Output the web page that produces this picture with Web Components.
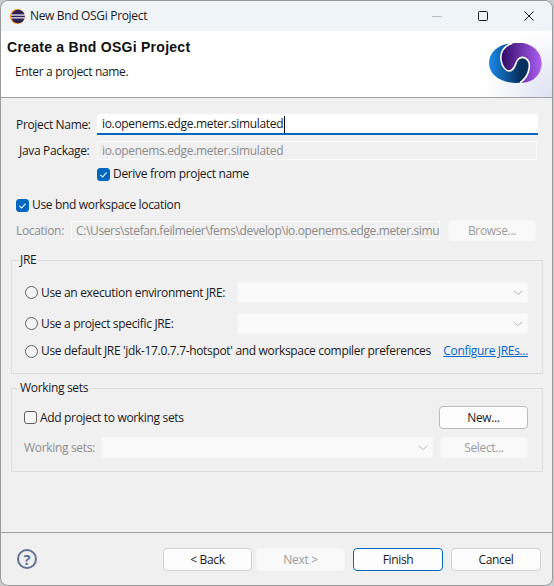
<!DOCTYPE html>
<html>
<head>
<meta charset="utf-8">
<title>New Bnd OSGi Project</title>
<style>
    html, body { margin: 0; padding: 0; height: 586px; overflow: hidden; background: #c9cbcd; }
    body { font: 12px/16px "Open Sans", sans-serif; letter-spacing: -0.33px; color: #1a1a1a; }
</style>
</head>
<body>

<template id="bnd-title-bar-template">
    <style>
        :host { display: flex; align-items: center; height: 30px; background: #eff4f9; flex: none; border-radius: 7px 7px 0 0; }
        svg.app { margin-left: 9px; margin-right: 5px; flex: none; }
        .caption { flex: 1; font-size: 12px; }
        .win { width: 46px; height: 30px; display: flex; align-items: center; justify-content: center; flex: none; }
    </style>
    <svg class="app" width="15" height="15" viewBox="0 0 15 15">
        <circle cx="7.5" cy="7.5" r="7.5" fill="#f7941e"/>
        <circle cx="8" cy="7.5" r="6.8" fill="#2c2255"/>
        <rect x="1" y="5.4" width="14" height="1.3" fill="#e8e6f0"/>
        <rect x="1" y="8.2" width="14" height="1.3" fill="#e8e6f0"/>
    </svg>
    <span class="caption"><slot></slot></span>
    <div class="win"><svg width="10" height="10"><path d="M0 5.5h10" stroke="#b8bcc0" stroke-width="1"/></svg></div>
    <div class="win"><svg width="10" height="10"><rect x=".5" y=".5" width="9" height="9" rx="1.2" fill="none" stroke="#1a1a1a"/></svg></div>
    <div class="win"><svg width="10" height="10"><path d="M.3 .3l9.4 9.4M9.7 .3L.3 9.7" stroke="#1a1a1a" stroke-width="1"/></svg></div>
</template>

<template id="bnd-banner-template">
    <style>
        :host { display: flex; flex: none; height: 67px; box-sizing: border-box; position: relative;
                background: radial-gradient(circle at 100% 100%, #dce2f3 0, #eef0f9 34px, #fff 68px); border-bottom: 1px solid #a0a0a0; }
        .text { flex: 1; padding: 7px 0 0 6px; }
        .title { font: bold 14px/18px "Liberation Sans", sans-serif; letter-spacing: 0.27px; color: #111; }
        .sub { margin: 8px 0 0 8px; font-size: 12px; line-height: 16px; }
        svg { flex: none; margin: 12px 10px 0 0; }
    </style>
    <div class="text">
        <div class="title"><slot name="title"></slot></div>
        <div class="sub"><slot name="sub"></slot></div>
    </div>
    <svg width="53" height="40" viewBox="0 0 53 40">
        <defs>
            <linearGradient id="blue" x1="0" x2="1" y1="0" y2="0"><stop offset="0" stop-color="#1b8ceb"/><stop offset=".75" stop-color="#06305f"/></linearGradient>
            <linearGradient id="purple" x1="0" x2="1" y1="0" y2="0"><stop offset="0" stop-color="#2f0a63"/><stop offset="1" stop-color="#ad5ff5"/></linearGradient>
        </defs>
        <path fill="url(#purple)" d="M23 .4C14 3 11 10 12 17C13 24 17 28 20 28C25 28 26 22 28 18C30 14 34 14 36 15C40 17 41 21 40 26C39 32 35 37 31 39.8C45 40 52.6 31 52.6 20C52.6 8 42 0 31 0C28 0 25 0 23 .4Z"/>
        <path fill="url(#blue)" d="M23 .4C14 3 11 10 12 17C13 24 17 28 20 28C25 28 26 22 28 18C30 14 34 14 36 15C40 17 41 21 40 26C39 32 35 37 31 39.8C14 41 0 33 0 20C0 9 10 1 23 .4Z"/>
        <path fill="none" stroke="#fff" stroke-width="1.6" d="M23 .4C14 3 11 10 12 17C13 24 17 28 20 28C25 28 26 22 28 18C30 14 34 14 36 15C40 17 41 21 40 26C39 32 35 37 31 39.8"/>
    </svg>
</template>

<template id="bnd-field-template">
    <style>
        :host { display: flex; align-items: center; box-sizing: border-box; padding: 1px 0 0 4px; overflow: hidden; white-space: nowrap; height: 19px; background: #f0f0f0; border: 1px solid #fafafa; color: #8b8b8b; }
        :host([focused]) { height: 21px; padding: 1px 0 0 5px; background: #fff; border: 0; border-bottom: 2px solid #0067c0; color: #1a1a1a; }
        .caret { display: none; width: 1px; height: 17px; background: #000; margin-left: 1px; flex: none; }
        :host([focused]) .caret { display: block; }
    </style>
    <slot></slot><span class="caret"></span>
</template>

<template id="bnd-check-template">
    <style>
        :host { display: flex; align-items: center; height: 16px; white-space: nowrap; }
        .box { width: 13px; height: 13px; box-sizing: border-box; border: 1px solid #5f5f5f; border-radius: 3px; margin-right: 3px; flex: none; display: flex; background: #f6f6f6; }
        :host([checked]) .box { background: #0067c0; border-color: #0067c0; }
        svg { display: none; }
        :host([checked]) svg { display: block; }
    </style>
    <span class="box"><svg width="11" height="11"><path d="M2.4 5.8l2.2 2.2 4-4.4" fill="none" stroke="#fff" stroke-width="1.1"/></svg></span>
    <slot></slot>
</template>

<template id="bnd-radio-template">
    <style>
        :host { display: flex; align-items: center; height: 16px; white-space: nowrap; }
        .dot { width: 13px; height: 13px; box-sizing: border-box; border: 1px solid #5f5f5f; border-radius: 50%; margin-right: 3px; flex: none; background: #f4f4f4; }
    </style>
    <span class="dot"></span>
    <slot></slot>
</template>

<template id="bnd-combo-template">
    <style>
        :host { display: flex; align-items: center; justify-content: flex-end; box-sizing: border-box; height: 21px; background: #fafafa; border: 1px solid #f6f6f6; padding-right: 4px; }
        svg { display: block; }
    </style>
    <svg width="10" height="6"><path d="M1 .8l4 4 4-4" fill="none" stroke="#b4b4b4"/></svg>
</template>

<template id="bnd-button-template">
    <style>
        :host { display: flex; align-items: center; justify-content: center; box-sizing: border-box; width: 89px; height: 23px; flex: none; border: 1px solid #d0d0d0; border-radius: 4px; background: #fdfdfd; color: #1a1a1a; }
        :host([dark]) { border-color: #bcbcbc; }
        :host([primary]) { border-color: #0067c0; }
        :host([disabled]) { background: #f9f9f9; border-color: #f7f7f7; color: #9b9b9b; }
    </style>
    <slot></slot>
</template>

<template id="bnd-group-template">
    <style>
        :host { display: block; position: relative; box-sizing: border-box; width: 532px; margin-left: 10px; border: 1px solid #dcdcdc; }
        .legend { position: absolute; left: 7px; top: -9px; line-height: 16px; padding: 0 1px; background: #f0f0f0; }
    </style>
    <div class="legend"><slot name="legend"></slot></div>
    <slot></slot>
</template>

<template id="bnd-help-template">
    <style>
        :host { display: flex; align-items: center; justify-content: center; box-sizing: border-box; width: 20px; height: 20px; flex: none; margin-top: -2px; border: 2px solid #5f7293; border-radius: 50%; color: #5f7293; font: bold 15px/16px "Open Sans", sans-serif; letter-spacing: 0; }
    </style>
    <slot></slot>
</template>

<template id="bnd-wizard-template">
    <style>
        :host { display: flex; flex-direction: column; box-sizing: border-box; width: 553px; height: 586px; background: #f0f0f0; border: 1px solid #9a9a9a; border-radius: 8px; overflow: hidden; }
        .page { flex: 1; min-height: 0; }
        .footer { flex: none; display: flex; align-items: center; height: 53px; box-sizing: border-box; border-top: 1px solid #a0a0a0; padding: 1px 10px 0 16px; }
        .footer ::slotted([slot=help]) { margin-right: auto; }
    </style>
    <slot name="title"></slot>
    <slot name="banner"></slot>
    <div class="page"><slot></slot></div>
    <div class="footer"><slot name="help"></slot><slot name="buttons"></slot></div>
</template>

<template id="bnd-project-page-template">
    <style>
        :host { display: block; padding-top: 16px; }
        .top { display: grid; grid-template-columns: 81px 441px; row-gap: 6px; padding-left: 15px; align-items: center; }
        .top .label { padding-top: 1px; }
        .top .java { padding-left: 3px; }
        .derive { grid-column: 2; }
        .loc-check { margin: 15px 0 0 15px; }
        .loc { display: flex; align-items: center; margin: 7px 0 0 15px; }
        .loc .muted { width: 55px; flex: none; }
        .loc bnd-field { width: 369px; flex: none; margin-right: 8px; letter-spacing: -0.37px; }
        .jre { margin-top: 19px; height: 114px; box-sizing: border-box; padding: 21px 14px 0 13px; }
        .jre-grid { display: grid; grid-template-columns: 212px 291px; row-gap: 10px; align-items: center; }
        .jre-last { display: flex; justify-content: space-between; align-items: center; height: 20px; margin-top: 7px; }
        .ws { margin-top: 14px; height: 84px; box-sizing: border-box; padding: 17px 14px 0 12px; }
        .ws-a { display: flex; justify-content: space-between; align-items: center; }
        .ws-b { display: flex; align-items: center; margin-top: 8px; }
        .ws-b .muted { width: 77px; flex: none; }
        .ws-b bnd-combo { width: 332px; margin-right: 7px; }
        .muted { color: #8d8d8d; }
        a { color: #0066cc; text-decoration: underline; }
    </style>
    <div class="top">
        <span class="label">Project Name:</span>
        <bnd-field focused>io.openems.edge.meter.simulated</bnd-field>
        <span class="label java">Java Package:</span>
        <bnd-field style="width:440px">io.openems.edge.meter.simulated</bnd-field>
        <bnd-check class="derive" checked>Derive from project name</bnd-check>
    </div>
    <bnd-check class="loc-check" checked>Use bnd workspace location</bnd-check>
    <div class="loc">
        <span class="muted">Location:</span>
        <bnd-field>C:\Users\stefan.feilmeier\fems\develop\io.openems.edge.meter.simu</bnd-field>
        <bnd-button disabled style="width:88px;height:21px">Browse...</bnd-button>
    </div>
    <bnd-group class="jre">
        <span slot="legend">JRE</span>
        <div class="jre-grid">
            <bnd-radio>Use an execution environment JRE:</bnd-radio><bnd-combo></bnd-combo>
            <bnd-radio>Use a project specific JRE:</bnd-radio><bnd-combo></bnd-combo>
        </div>
        <div class="jre-last">
            <bnd-radio>Use default JRE 'jdk-17.0.7.7-hotspot' and workspace compiler preferences</bnd-radio>
            <a>Configure JREs...</a>
        </div>
    </bnd-group>
    <bnd-group class="ws">
        <span slot="legend">Working sets</span>
        <div class="ws-a">
            <bnd-check>Add project to working sets</bnd-check>
            <bnd-button dark>New...</bnd-button>
        </div>
        <div class="ws-b">
            <span class="muted">Working sets:</span>
            <bnd-combo></bnd-combo>
            <bnd-button disabled style="height:21px;width:88px">Select...</bnd-button>
        </div>
    </bnd-group>
</template>

<bnd-wizard>
    <bnd-title-bar slot="title">New Bnd OSGi Project</bnd-title-bar>
    <bnd-banner slot="banner">
        <span slot="title">Create a Bnd OSGi Project</span>
        <span slot="sub">Enter a project name.</span>
    </bnd-banner>
    <bnd-project-page></bnd-project-page>
    <bnd-help slot="help">?</bnd-help>
    <bnd-button slot="buttons">&lt; Back</bnd-button>
    <bnd-button slot="buttons" disabled style="margin-left:4px">Next &gt;</bnd-button>
    <bnd-button slot="buttons" primary style="margin-left:8px;width:90px">Finish</bnd-button>
    <bnd-button slot="buttons" style="margin-left:8px;width:90px;margin-right:1px">Cancel</bnd-button>
</bnd-wizard>

<script>
// every element is only its template in an open shadow root
['bnd-title-bar', 'bnd-banner', 'bnd-field', 'bnd-check', 'bnd-radio', 'bnd-combo', 'bnd-button',
 'bnd-group', 'bnd-help', 'bnd-wizard', 'bnd-project-page'].forEach(name => {
    let template = document.querySelector('#' + name + '-template');
    customElements.define(name, class extends HTMLElement {
        constructor(){
            super();
            this.attachShadow({mode: 'open'}).appendChild(template.content.cloneNode(true));
        }
    });
});
</script>
</body>
</html>
